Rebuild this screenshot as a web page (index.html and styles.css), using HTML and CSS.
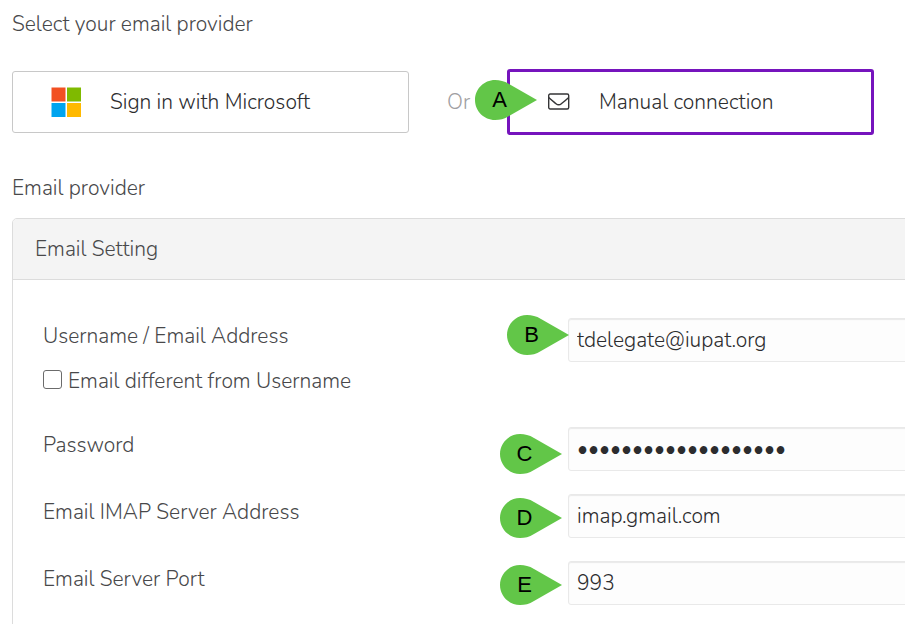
FILE: index.html
```html
<!DOCTYPE html>
<html lang="en">
<head>
<meta charset="utf-8">
<title>Email provider</title>
<link rel="stylesheet" href="styles.css">
</head>
<body>
<svg class="defs" aria-hidden="true">
  <symbol id="drop" viewBox="0 0 62 40">
    <path d="M20 0C9 0 0 9 0 20s9 20 20 20c5 0 9-1 14-4L62 20 34 4C29 1 25 0 20 0z"/>
  </symbol>
</svg>
<main class="page">
  <h1 class="title">Select your email provider</h1>
  <div class="providers">
    <button type="button" class="provider">
      <svg class="ms-logo" viewBox="0 0 30 30" aria-hidden="true">
        <path fill="#f25022" d="M0.500 0.500h14v14h-14z"/>
        <path fill="#7fba00" d="M16 0.500h14v14H16z"/>
        <path fill="#00a4ef" d="M0.500 16h14v14h-14z"/>
        <path fill="#ffb900" d="M16 16h14v14H16z"/>
      </svg>
      <span>Sign in with Microsoft</span>
    </button>
    <span class="or">Or</span>
    <div class="anchor">
      <button type="button" class="provider provider-selected">
        <svg class="envelope" viewBox="0 0 22 18" aria-hidden="true">
          <rect x="0.700" y="1" width="20" height="15" rx="1.500"/>
          <path d="M0.700 4.500C4 7.500 6 9 8 10.700Q10.700 13 13.400 10.700C15.500 9 17.500 7.500 20.700 4.500"/>
        </svg>
        <span>Manual connection</span>
      </button>
      <span class="marker marker-a"><svg aria-hidden="true"><use href="#drop"/></svg><b>A</b></span>
    </div>
  </div>
  <h2 class="title">Email provider</h2>
  <section class="panel">
    <h3 class="panel-head">Email Setting</h3>
    <form class="fields">
      <div class="field field-user">
        <div class="labels">
          <label for="user">Username / Email Address</label>
          <label class="check"><input type="checkbox">Email different from Username</label>
        </div>
        <div class="anchor">
          <input class="text" id="user" type="text" value="tdelegate@iupat.org">
          <span class="marker marker-b"><svg aria-hidden="true"><use href="#drop"/></svg><b>B</b></span>
        </div>
      </div>
      <div class="field">
        <div class="labels"><label for="pass">Password</label></div>
        <div class="anchor">
          <input class="text" id="pass" type="password" value="0000000000000000000">
          <span class="marker marker-c"><svg aria-hidden="true"><use href="#drop"/></svg><b>C</b></span>
        </div>
      </div>
      <div class="field">
        <div class="labels"><label for="imap">Email IMAP Server Address</label></div>
        <div class="anchor">
          <input class="text" id="imap" type="text" value="imap.gmail.com">
          <span class="marker marker-d"><svg aria-hidden="true"><use href="#drop"/></svg><b>D</b></span>
        </div>
      </div>
      <div class="field">
        <div class="labels"><label for="port">Email Server Port</label></div>
        <div class="anchor">
          <input class="text" id="port" type="text" value="993">
          <span class="marker marker-d"><svg aria-hidden="true"><use href="#drop"/></svg><b>E</b></span>
        </div>
      </div>
    </form>
  </section>
</main>
</body>
</html>
```
FILE: styles.css
```css
* { box-sizing: border-box; }
html { overflow: hidden; }
body {
  margin: 0;
  background: #fff;
  color: #48484a;
  font: 300 21px/30px Nunito, "Open Sans", sans-serif;
}
button, input { font: inherit; }
.defs { display: none; }
.page { padding: 9px 0 0 12px; }
.title { margin: 0; font: inherit; }
.providers {
  display: grid;
  grid-template-columns: 397fr 98px 367fr;
  align-items: center;
  margin: 30px 31px 38px 0;
}
.provider {
  display: flex;
  align-items: center;
  gap: 29px;
  width: 100%;
  height: 62px;
  padding: 0 38px;
  border: 1px solid #c8c8c8;
  border-radius: 3px;
  background: #fff;
  color: #2c2c2e;
}
.provider-selected {
  height: 66px;
  border: 3px solid #7614bd;
}
.ms-logo { width: 30px; height: 30px; }
.envelope {
  width: 22px;
  height: 18px;
  fill: none;
  stroke: #353537;
  stroke-width: 1.4;
}
.or { padding-left: 38px; color: #a0a0a2; }
.anchor { position: relative; }

.marker {
  position: absolute;
  width: 62px;
  height: 40px;
  color: #000;
}
.marker svg { display: block; width: 100%; height: 100%; fill: #62c648; }
.marker b {
  position: absolute;
  inset: 0 13px 0 0;
  font: 400 22px/40px "Liberation Sans", sans-serif;
  text-align: center;
}
.marker-a { left: -32px; top: 11px; }
.marker-b { left: -61px; top: -3px; }
.marker-c { left: -68px; top: 7px; }
.marker-d { left: -68px; top: 4px; }

.panel {
  margin: 15px -20px 0 0;
  border: 1px solid #dcdcdc;
  border-radius: 5px;
}
.panel-head {
  margin: 0;
  padding: 15px 22px;
  border-bottom: 1px solid #dcdcdc;
  border-radius: 4px 4px 0 0;
  background: #f4f4f4;
  font: inherit;
}
.fields {
  display: grid;
  gap: 23px;
  padding: 38px 0 38px 30px;
}
.field {
  display: grid;
  grid-template-columns: 525px 1fr;
  align-items: start;
}
.field-user { margin-bottom: 8px; }
.labels { display: grid; gap: 15px; padding-top: 3px; }
.check { display: flex; align-items: center; gap: 6px; }
.check input {
  appearance: none;
  width: 19px;
  height: 19px;
  margin: 0 0 4px;
  border: 1px solid #6b6b6b;
  border-radius: 3px;
}
.text {
  display: block;
  width: 100%;
  height: 44px;
  padding: 0 8px;
  border: 1px solid #e9e9e9;
  border-radius: 3px;
  outline: 0;
  background: #fdfdfd;
  box-shadow: inset 0 1px 1px #e9e9e9;
  color: #2c2c2e;
}
```
